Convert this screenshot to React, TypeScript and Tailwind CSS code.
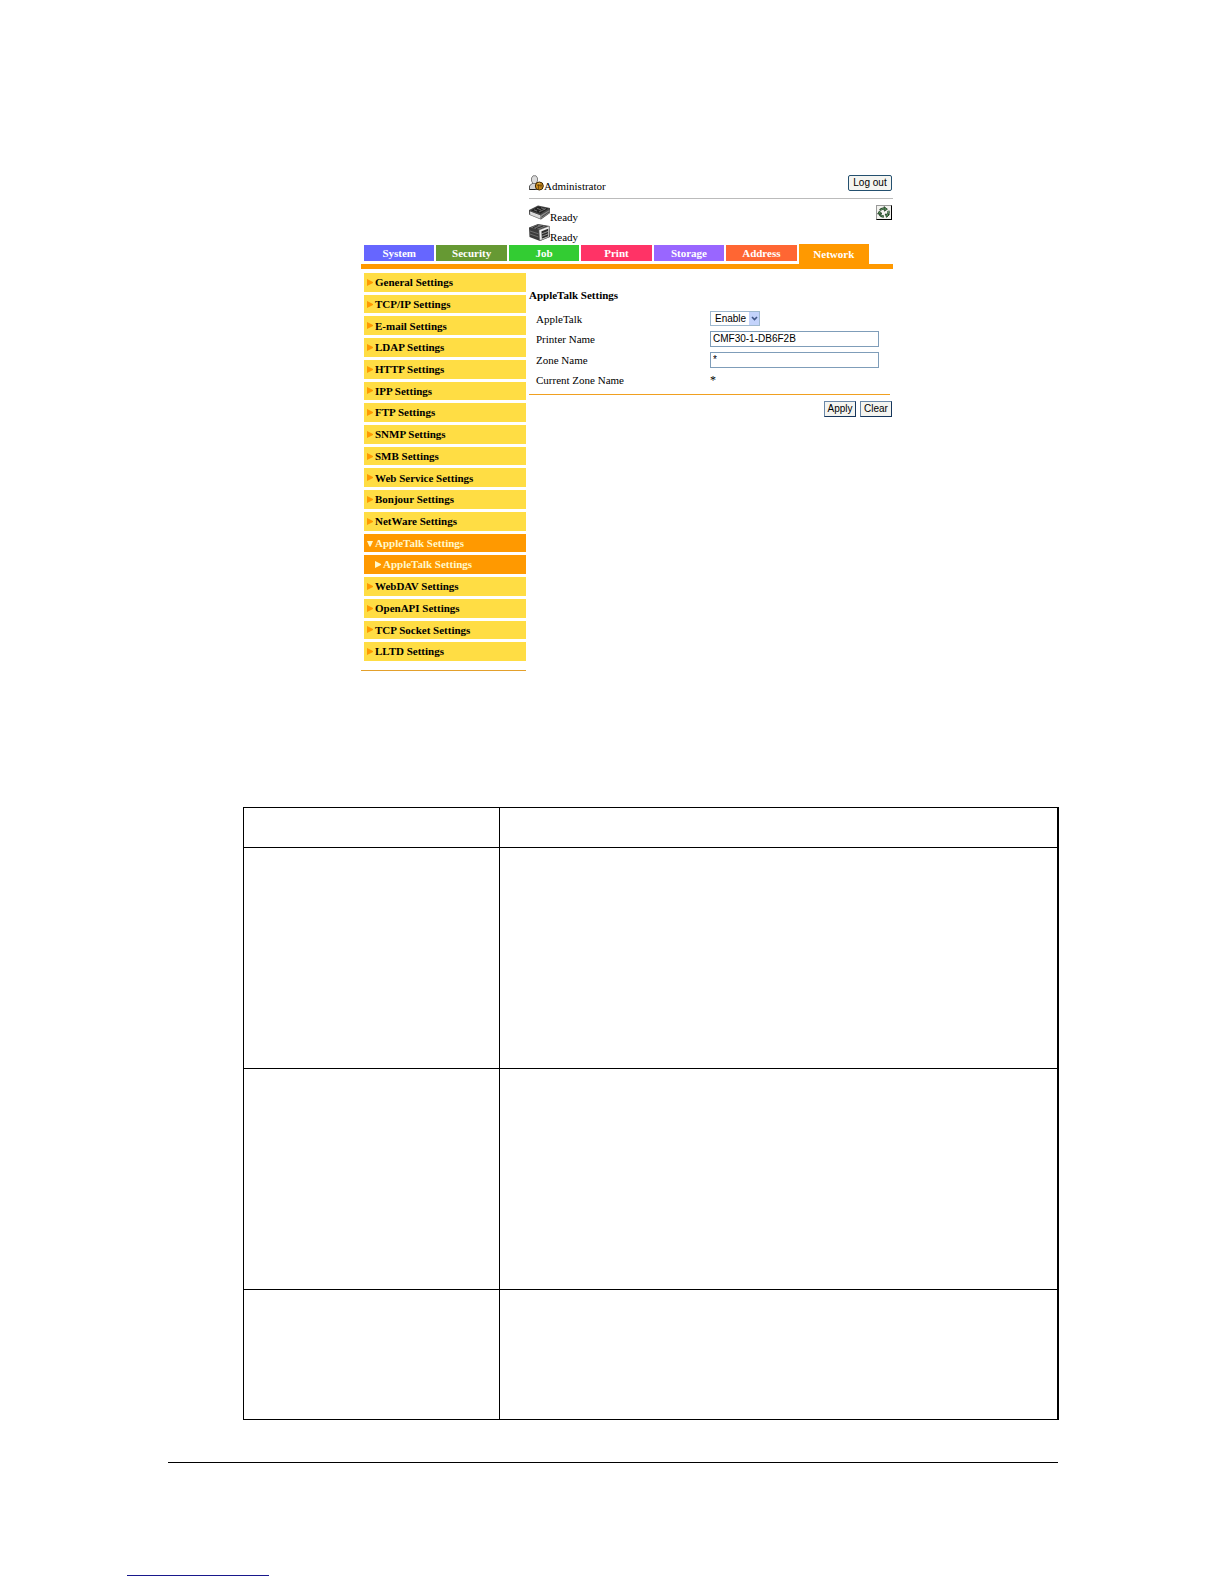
import React from "react";

const tabs = [
  { label: "System", cls: "bg-[#6666ff]" },
  { label: "Security", cls: "bg-[#669933]" },
  { label: "Job", cls: "bg-[#33cc33]" },
  { label: "Print", cls: "bg-[#ff3366]" },
  { label: "Storage", cls: "bg-[#9966ff]" },
  { label: "Address", cls: "bg-[#ff6633]" },
];

const menu = [
  "General Settings",
  "TCP/IP Settings",
  "E-mail Settings",
  "LDAP Settings",
  "HTTP Settings",
  "IPP Settings",
  "FTP Settings",
  "SNMP Settings",
  "SMB Settings",
  "Web Service Settings",
  "Bonjour Settings",
  "NetWare Settings",
  "AppleTalk Settings",
  "sub",
  "WebDAV Settings",
  "OpenAPI Settings",
  "TCP Socket Settings",
  "LLTD Settings",
];

const serif = "font-['Liberation_Serif',serif]";
const sans = "font-['Liberation_Sans',sans-serif]";

function Arrow({ down = false }: { down?: boolean }) {
  return (
    <svg viewBox="0 0 6 7" className="h-[7px] w-[6px] shrink-0" fill="currentColor" aria-hidden="true">
      {down ? <path d="M0 1h6L3.6 6.5H2.4z" /> : <path d="M0 0L6 3V4L0 7z" />}
    </svg>
  );
}

function AdminIcon() {
  return (
    <svg viewBox="0 0 15 16" className="h-4 w-[15px] shrink-0" aria-hidden="true">
      <path d="M0.5 14.5V11L3 8.5h5l2 3v3z" fill="#d4d4d4" stroke="#555" />
      <path d="M2.5 3L4 0.8h3L8.5 3v3L7 8.5H4L2.5 6z" fill="#dcdcdc" stroke="#777" strokeWidth="0.9" />
      <path d="M0.5 14.5h6" stroke="#222" />
      <circle cx="10.3" cy="11" r="4" fill="#c98a1b" stroke="#3b2606" />
      <path d="M8 10.2h5M9.6 9v5M12 10.5v2" stroke="#5a3a08" strokeWidth="0.8" />
      <path d="M8.5 8.7h2.5" stroke="#f4cf6a" strokeWidth="0.8" />
    </svg>
  );
}

function PrinterIcon() {
  return (
    <svg viewBox="0 0 21 15" className="h-[15px] w-[21px] shrink-0" aria-hidden="true">
      <path d="M0 5L9 0.5L21 3V8L12 14.5L0 9.5z" fill="#4a4a4a" />
      <path d="M1 7L11.5 11V14L1 9.8z" fill="#dadada" stroke="#777" strokeWidth="0.5" />
      <path d="M12 10L20.5 5V8L12 13.8z" fill="#8a8a8a" />
      <path d="M2 5.5L9 1.5L19.5 3.5L11.5 8.8z" fill="#222" />
      <path d="M5 4.8L8 6M8 3.2L12 5M12 2.8L16 4.3M10 7L17 3.5" stroke="#8c8c8c" strokeWidth="0.7" />
      <path d="M12.5 12L20 7" stroke="#333" strokeWidth="0.8" />
      <path d="M1 7L11.5 11" stroke="#fff" strokeWidth="0.8" />
    </svg>
  );
}

function TrayIcon() {
  return (
    <svg viewBox="0 0 21 17" className="h-[17px] w-[21px] shrink-0" aria-hidden="true">
      <path d="M0 3.5L9 0L20.5 2L21 13L11 17L0.5 13z" fill="#3c3c3c" />
      <path d="M1 3.5L9 0.5L17 2L10 5.5z" fill="#707070" />
      <path d="M4 3.8L9 1.5M7 4.6L14 2" stroke="#242424" strokeWidth="0.9" />
      <path d="M10 6L20 2.2V12.8L10.8 16.6z" fill="#f0f0f0" stroke="#777" strokeWidth="0.5" />
      <path d="M12.5 7.2L19.2 4.7V12.2L12.8 14.8z" fill="#2c2c2c" />
      <path d="M12.8 9.8L19 7.4M12.8 12.4L19 9.9" stroke="#aaa" strokeWidth="0.8" />
      <path d="M1 7L9.5 9.8M1 10L9.5 13" stroke="#858585" strokeWidth="0.7" />
    </svg>
  );
}

function RefreshIcon() {
  return (
    <svg viewBox="0 0 14 13" className="h-[13px] w-[14px]" aria-hidden="true">
      <g fill="none" stroke="#1d3a20" strokeWidth="2.2">
        <path d="M3 4.2Q4.8 2 7.5 2.7" />
        <path d="M11.4 4.8Q12.2 7.5 10 9.5" />
        <path d="M7 10.5Q3.6 10.5 2.6 7.8" />
      </g>
      <g fill="#4f9054" stroke="#142b16" strokeWidth="0.7" strokeLinejoin="round">
        <path d="M7 0.6L10.4 3.2L7.4 5.2z" />
        <path d="M8.2 8L12.4 8.6L9.6 11.4z" />
        <path d="M0.6 8L2.4 5L5 7.6z" />
      </g>
      <g fill="none" stroke="#7db581" strokeWidth="0.8">
        <path d="M3.4 4Q5 2.4 7.2 2.8" />
        <path d="M11.4 5Q12 7 10.4 8.8" />
        <path d="M6.6 10.5Q4 10.3 3 8.4" />
      </g>
    </svg>
  );
}

function Row({ label, htmlFor, height, children }: { label: string; htmlFor?: string; height: string; children: React.ReactNode }) {
  return (
    <div className={`flex items-center pl-[7px] ${height}`}>
      <label htmlFor={htmlFor} className="w-[174px] shrink-0 text-[11px] leading-3">
        {label}
      </label>
      {children}
    </div>
  );
}

function FormButton({ children }: { children: React.ReactNode }) {
  return (
    <button
      type="button"
      className={`${sans} h-4 min-w-[32px] border border-[#6a88a8] border-r-[#16365c] border-b-[#16365c] bg-[#f4f4f0] px-[2px] text-[10px] leading-3`}
    >
      {children}
    </button>
  );
}

function WebPanel() {
  return (
    <section className={`${serif} mr-[166px] ml-[193px] text-black`}>
      <header className="ml-[168px]">
        <div className="flex h-6 items-start justify-between border-b border-[#bbb] pr-px">
          <div className="flex items-start text-[11px] leading-3">
            <AdminIcon />
            <span className="pt-[5px]">Administrator</span>
          </div>
          <button
            type="button"
            className={`${sans} h-4 w-11 rounded-[2px] border border-[#24506f] bg-[#f5f5f1] text-[10px] leading-3`}
          >
            Log out
          </button>
        </div>
        <div className="flex h-[45px] items-start justify-between pt-[6px] pr-px">
          <div className="text-[11px] leading-3">
            <div className="flex h-[19px] items-start">
              <PrinterIcon />
              <span className="pt-[6px]">Ready</span>
            </div>
            <div className="flex h-[18px] items-start">
              <TrayIcon />
              <span className="pt-[7px]">Ready</span>
            </div>
          </div>
          <button
            type="button"
            aria-label="Refresh"
            className="flex h-[15px] w-4 items-center justify-center border border-[#999] border-r-black border-b-black bg-[#f2f2ee]"
          >
            <RefreshIcon />
          </button>
        </div>
      </header>

      <nav className="grid h-5 grid-cols-7 items-start gap-x-[2px] pr-6 pl-[3px] text-center text-[11px] font-bold text-white">
        {tabs.map((t) => (
          <a key={t.label} href="#" className={`mt-px block h-4 leading-4 ${t.cls}`}>
            {t.label}
          </a>
        ))}
        <a href="#" className="block h-5 bg-[#ff9900] leading-5">
          Network
        </a>
      </nav>
      <div className="h-[5px] bg-[#ff9900]" />

      <div className="flex">
        <nav className="w-[165px] shrink-0 border-b border-[#e3a02c] pt-[4px] pb-[9px]">
          <ul className="ml-[3px] grid h-[388px] auto-rows-fr gap-[3px] text-[11px] font-bold">
            {menu.map((m) =>
              m === "AppleTalk Settings" || m === "sub" ? (
                <li key={m} className={m === "sub" ? "bg-[#ff9900] pl-[11px]" : "bg-[#ff9900] pl-[3px]"}>
                  <a href="#" className="flex h-full items-center gap-[2px] text-[#fff8cc]">
                    <Arrow down={m !== "sub"} />
                    AppleTalk Settings
                  </a>
                </li>
              ) : (
                <li key={m} className="bg-[#ffdd44] pl-[3px]">
                  <a href="#" className="flex h-full items-center gap-[2px]">
                    <span className="text-[#ff9900]">
                      <Arrow />
                    </span>
                    {m}
                  </a>
                </li>
              ),
            )}
          </ul>
        </nav>

        <form className="ml-[3px] flex-1 pt-5" onSubmit={(e) => e.preventDefault()}>
          <h1 className="h-5 text-[11px] leading-3 font-bold">AppleTalk Settings</h1>
          <div className="mr-[3px] border-b border-[#f0a020] pb-[4px]">
            <Row label="AppleTalk" htmlFor="appletalk" height="h-[19px]">
              <div className="relative h-[15px] w-[50px]">
                <select
                  id="appletalk"
                  defaultValue="Enable"
                  className={`${sans} block h-full w-full appearance-none border border-[#9fb9cf] bg-white pl-[4px] text-[10px] leading-3`}
                >
                  <option>Enable</option>
                  <option>Disable</option>
                </select>
                <span className="pointer-events-none absolute top-px right-px flex h-[13px] w-[10px] items-center justify-center bg-[#c3d3fb]">
                  <svg viewBox="0 0 7 5" className="h-[5px] w-[7px]" aria-hidden="true">
                    <path d="M1 1L3.5 3.5L6 1" fill="none" stroke="#3f5585" strokeWidth="1.6" />
                  </svg>
                </span>
              </div>
            </Row>
            <Row label="Printer Name" htmlFor="printer" height="h-[21px]">
              <input
                id="printer"
                defaultValue="CMF30-1-DB6F2B"
                className={`${sans} mr-[11px] h-4 min-w-0 flex-1 border border-[#7f9db9] bg-white px-[2px] text-[10px] leading-3`}
              />
            </Row>
            <Row label="Zone Name" htmlFor="zone" height="h-[21px]">
              <input
                id="zone"
                defaultValue="*"
                className={`${sans} mr-[11px] h-4 min-w-0 flex-1 border border-[#7f9db9] bg-white px-[2px] text-[10px] leading-3`}
              />
            </Row>
            <Row label="Current Zone Name" height="h-[20px]">
              <span className="text-[12px] leading-3">*</span>
            </Row>
          </div>
          <div className="mt-[6px] mr-px flex justify-end gap-1">
            <FormButton>Apply</FormButton>
            <FormButton>Clear</FormButton>
          </div>
        </form>
      </div>
    </section>
  );
}

const rowHeights = ["h-[40px]", "h-[221px]", "h-[221px]", "h-[130px]"];

export default function App() {
  return (
    <main className="min-h-screen bg-white pt-[175px]">
      <div className="mr-[165px] ml-[168px]">
        <WebPanel />
        <div className="mt-[136px] ml-[75px]">
          <table className="w-full table-fixed border-collapse border border-r-2 border-black">
            <colgroup>
              <col className="w-[256px]" />
              <col />
            </colgroup>
            <tbody>
              {rowHeights.map((h, i) => (
                <tr key={i} className={h}>
                  <td className="border border-black" />
                  <td className="border border-r-2 border-black" />
                </tr>
              ))}
            </tbody>
          </table>
        </div>
        <hr className="mt-[42px] mr-px border-t border-black" />
      </div>
      <div className="mt-[112px] ml-[127px] w-[142px] border-t border-[#18188c]" />
    </main>
  );
}
